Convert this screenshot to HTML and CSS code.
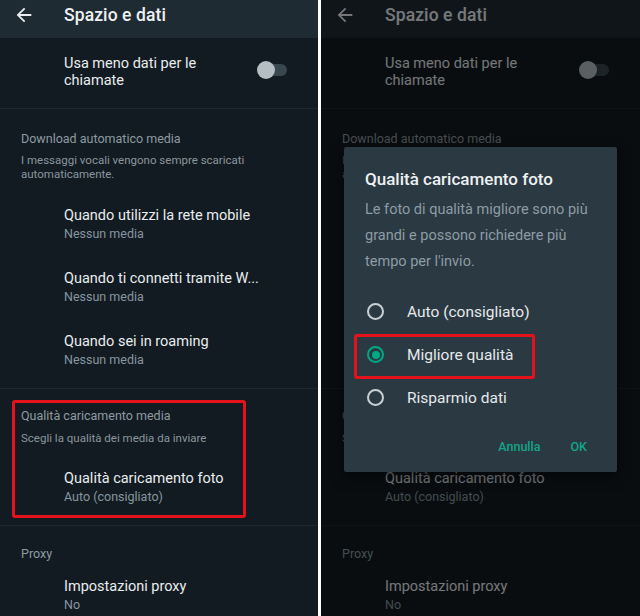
FILE: index.html
```html
<!DOCTYPE html>
<html lang="it">
<head>
<meta charset="utf-8">
<title>Spazio e dati</title>
<link rel="stylesheet" href="styles.css">
</head>
<body>
<div class="screens">
  <div class="panel panel-left">
    <header class="appbar">
      <svg class="back" viewBox="0 0 24 24" width="22" height="22"><path fill="#e9edef" d="M20 11H7.83l5.59-5.59L12 4l-8 8 8 8 1.41-1.41L7.83 13H20v-2z"/></svg>
      <span class="appbar-title">Spazio e dati</span>
    </header>
    <div class="toggle-row">
      <span class="toggle-text">Usa meno dati per le chiamate</span>
      <span class="switch"><span class="switch-track"></span><span class="switch-thumb"></span></span>
    </div>
    <section class="section sec-download">
      <div class="sec-title">Download automatico media</div>
      <div class="sec-desc">I messaggi vocali vengono sempre scaricati automaticamente.</div>
      <div class="item item-first"><div class="item-title">Quando utilizzi la rete mobile</div><div class="item-sub">Nessun media</div></div>
      <div class="item"><div class="item-title">Quando ti connetti tramite W...</div><div class="item-sub">Nessun media</div></div>
      <div class="item"><div class="item-title">Quando sei in roaming</div><div class="item-sub">Nessun media</div></div>
    </section>
    <section class="section sec-quality">
      <div class="sec-title">Qualità caricamento media</div>
      <div class="sec-desc">Scegli la qualità dei media da inviare</div>
      <div class="item item-first-q"><div class="item-title">Qualità caricamento foto</div><div class="item-sub">Auto (consigliato)</div></div>
    </section>
    <section class="section sec-proxy">
      <div class="sec-title">Proxy</div>
      <div class="item item-first-p"><div class="item-title">Impostazioni proxy</div><div class="item-sub">No</div></div>
    </section>
    <div class="mark mark-left"></div>
  </div>

  <div class="panel panel-right">
    <header class="appbar">
      <svg class="back" viewBox="0 0 24 24" width="22" height="22"><path fill="#e9edef" d="M20 11H7.83l5.59-5.59L12 4l-8 8 8 8 1.41-1.41L7.83 13H20v-2z"/></svg>
      <span class="appbar-title">Spazio e dati</span>
    </header>
    <div class="toggle-row">
      <span class="toggle-text">Usa meno dati per le chiamate</span>
      <span class="switch"><span class="switch-track"></span><span class="switch-thumb"></span></span>
    </div>
    <section class="section sec-download">
      <div class="sec-title">Download automatico media</div>
      <div class="sec-desc">I messaggi vocali vengono sempre scaricati automaticamente.</div>
      <div class="item item-first"><div class="item-title">Quando utilizzi la rete mobile</div><div class="item-sub">Nessun media</div></div>
      <div class="item"><div class="item-title">Quando ti connetti tramite W...</div><div class="item-sub">Nessun media</div></div>
      <div class="item"><div class="item-title">Quando sei in roaming</div><div class="item-sub">Nessun media</div></div>
    </section>
    <section class="section sec-quality">
      <div class="sec-title">Qualità caricamento media</div>
      <div class="sec-desc">Scegli la qualità dei media da inviare</div>
      <div class="item item-first-q"><div class="item-title">Qualità caricamento foto</div><div class="item-sub">Auto (consigliato)</div></div>
    </section>
    <section class="section sec-proxy">
      <div class="sec-title">Proxy</div>
      <div class="item item-first-p"><div class="item-title">Impostazioni proxy</div><div class="item-sub">No</div></div>
    </section>

    <div class="scrim"></div>
    <div class="dialog">
      <div class="dialog-title">Qualità caricamento foto</div>
      <div class="dialog-body">Le foto di qualità migliore sono più grandi e possono richiedere più tempo per l'invio.</div>
      <div class="options">
        <div class="option"><span class="radio"></span><span class="option-label">Auto (consigliato)</span></div>
        <div class="option"><span class="radio radio-on"></span><span class="option-label">Migliore qualità</span></div>
        <div class="option"><span class="radio"></span><span class="option-label">Risparmio dati</span></div>
      </div>
      <div class="actions">
        <span class="btn">Annulla</span>
        <span class="btn">OK</span>
      </div>
    </div>
    <div class="mark mark-right"></div>
  </div>
</div>
</body>
</html>
```

FILE: styles.css
```css
* { box-sizing: border-box; margin: 0; padding: 0; }

html, body {
  width: 640px;
  height: 616px;
  overflow: hidden;
  background: #ffffff;
}

body {
  font-family: Roboto, "Noto Sans", "Liberation Sans", sans-serif;
  color: #e9edef;
}

.screens {
  display: flex;
  gap: 3px;
  height: 616px;
}

.panel {
  position: relative;
  height: 616px;
  background: #121b21;
  overflow: hidden;
}

.panel-left { width: 318px; }
.panel-right { width: 319px; }

.appbar {
  height: 38px;
  background: #1f2b32;
  display: flex;
  align-items: center;
  padding: 0 0 8px 13px;
}

.back { display: block; flex: none; }

.appbar-title {
  margin-left: 29px;
  font-size: 17.5px;
  font-weight: 500;
  letter-spacing: 0.1px;
  color: #eef1f3;
}

.toggle-row {
  height: 71px;
  display: flex;
  justify-content: space-between;
  align-items: flex-start;
  padding: 17px 31px 0 64px;
  border-bottom: 1px solid #1d272d;
}

.toggle-text {
  width: 150px;
  font-size: 14.5px;
  line-height: 17px;
  color: #e9edef;
}

.switch {
  position: relative;
  width: 30px;
  height: 18px;
  margin-top: 6px;
}

.switch-track {
  position: absolute;
  left: 5px;
  right: 0;
  top: 3px;
  height: 12px;
  border-radius: 6px;
  background: #39474f;
}

.switch-thumb {
  position: absolute;
  left: 0;
  top: 0;
  width: 18px;
  height: 18px;
  border-radius: 50%;
  background: #b4bec3;
}

.section {
  border-bottom: 1px solid #1d272d;
}

.sec-title {
  padding-left: 21px;
  font-size: 12.5px;
  line-height: 16px;
  color: #8e9aa1;
}

.sec-desc {
  padding-left: 21px;
  padding-right: 40px;
  margin-top: 6px;
  font-size: 11.5px;
  line-height: 14px;
  color: #8a969d;
}

.item {
  padding: 13px 0 15px 64px;
}

.item-title {
  font-size: 14.5px;
  line-height: 18px;
  color: #e9edef;
  white-space: nowrap;
}

.item-sub {
  font-size: 12.5px;
  line-height: 17px;
  color: #8696a0;
}

.sec-download { padding: 22px 0 5px; }
.sec-download .item-first { margin-top: 13px; }

.sec-quality { padding: 19px 0 5px; }
.sec-quality .sec-desc { margin-top: 7px; }
.sec-quality .item-first-q { margin-top: 12px; }

.sec-proxy { padding: 20px 0 0; border-bottom: 0; }
.sec-proxy .item-first-p { margin-top: 3px; }

.mark {
  position: absolute;
  border: 3px solid #e4121b;
  border-radius: 3px;
}

.mark-left {
  left: 12px;
  top: 400px;
  width: 234px;
  height: 118px;
}

.scrim {
  position: absolute;
  inset: 0;
  background: rgba(0, 0, 0, 0.5);
}

.dialog {
  position: absolute;
  left: 23px;
  top: 147px;
  width: 273px;
  height: 325px;
  background: #2b3942;
  border-radius: 2px;
  box-shadow: 0 4px 14px rgba(0, 0, 0, 0.5);
  padding-top: 21px;
}

.dialog-title {
  padding-left: 21px;
  font-size: 17px;
  font-weight: 500;
  line-height: 22px;
  color: #eef1f3;
}

.dialog-body {
  margin-top: 7px;
  padding: 0 21px;
  font-size: 14.5px;
  line-height: 26px;
  color: #8e9ca5;
}

.options {
  margin-top: 15px;
}

.option {
  height: 43px;
  display: flex;
  align-items: center;
  padding-left: 23px;
}

.radio {
  width: 17px;
  height: 17px;
  border: 2px solid #c9d0d4;
  border-radius: 50%;
  flex: none;
  position: relative;
}

.radio-on {
  border-color: #00a884;
}

.radio-on::after {
  content: "";
  position: absolute;
  left: 2.5px;
  top: 2.5px;
  width: 8px;
  height: 8px;
  border-radius: 50%;
  background: #00a884;
}

.option-label {
  margin-left: 23px;
  font-size: 15.5px;
  color: #e6eaec;
}

.actions {
  margin-top: 9px;
  height: 36px;
  display: flex;
  justify-content: flex-end;
  align-items: center;
  gap: 14px;
  padding-right: 22px;
}

.btn {
  padding: 0 8px;
  font-size: 12.5px;
  font-weight: 500;
  color: #12a68a;
}

.mark-right {
  left: 33px;
  top: 334px;
  width: 181px;
  height: 45px;
}
```
